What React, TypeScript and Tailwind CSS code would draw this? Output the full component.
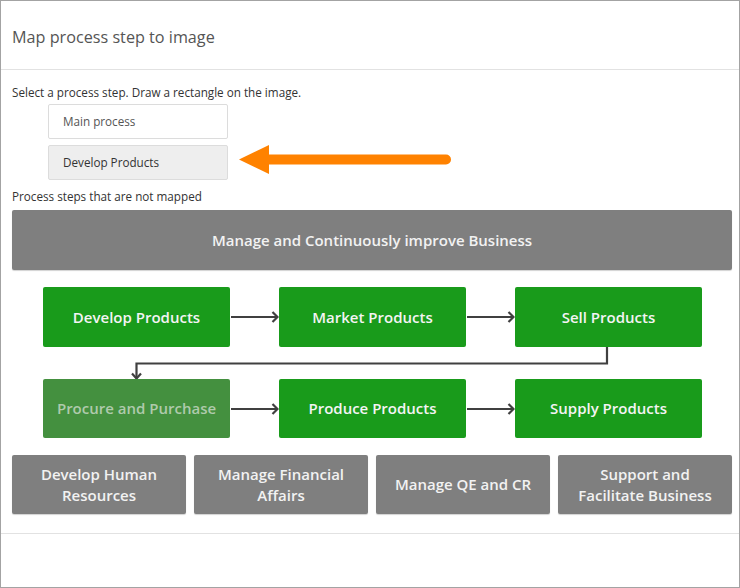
import React from "react";

function HArrow() {
  return (
    <svg width="49" height="60" viewBox="0 0 49 60" className="shrink-0">
      <line x1="1" y1="30" x2="47.5" y2="30" stroke="#404040" strokeWidth="2.2" />
      <polyline points="42.5,25 47.5,30 42.5,35" fill="none" stroke="#404040" strokeWidth="2.2" />
    </svg>
  );
}

function GreenBox({ children, faded }: { children: React.ReactNode; faded?: boolean }) {
  return (
    <div
      className={
        faded
          ? "w-[187px] h-full shrink-0 rounded-[2px] bg-[#44903f] text-[#afcaac] flex items-center justify-center text-[15px] font-semibold"
          : "w-[187px] h-full shrink-0 rounded-[2px] bg-[#199b1b] text-[#f4f4f4] flex items-center justify-center text-[15px] font-semibold"
      }
    >
      {children}
    </div>
  );
}

function GrayBox({ children }: { children: React.ReactNode }) {
  return (
    <div className="h-full rounded-[2px] bg-[#7f7f7f] text-[#f2f2f2] flex items-center justify-center text-center text-[15px] leading-[21px] font-semibold shadow-[0_1px_1px_rgba(0,0,0,0.18)]">
      {children}
    </div>
  );
}

export default function App() {
  return (
    <div className="w-[740px] h-[588px] box-border border border-[#a3a3a3] bg-white flex flex-col overflow-hidden font-['Open_Sans',sans-serif]">
      <div className="h-[69px] shrink-0 border-b border-[#e2e2e2] pl-[11px] pt-[24px]">
        <h1 className="text-[16.2px] leading-[24px] text-[#555555] font-normal">Map process step to image</h1>
      </div>

      <div className="flex-1 pl-[11px] pt-[13px]">
        <p className="text-[11.7px] leading-[18px] text-[#333333]">
          Select a process step. Draw a rectangle on the image.
        </p>
        <div className="ml-[36px] mt-[3px] flex flex-col gap-[6px]">
          <div className="w-[180px] h-[35px] box-border border border-[#dcdcdc] rounded-[2px] bg-white pl-[14px] pt-[1px] flex items-center text-[11.7px] text-[#555555]">
            Main process
          </div>
          <div className="flex items-start">
            <div className="w-[180px] h-[35px] box-border border border-[#dcdcdc] rounded-[2px] bg-[#eeeeee] pl-[14px] pt-[1px] flex items-center text-[11.7px] text-[#333333]">
              Develop Products
            </div>
            <svg width="214" height="30" viewBox="0 0 214 30" className="ml-[11px] shrink-0">
              <polygon points="0,14.5 30,0 30,29" fill="#ff8200" />
              <line x1="29" y1="14.5" x2="207" y2="14.5" stroke="#ff8200" strokeWidth="10" strokeLinecap="round" />
            </svg>
          </div>
        </div>
        <p className="mt-[7px] text-[11.7px] leading-[18px] text-[#333333]">Process steps that are not mapped</p>

        <div className="mt-[5px] w-[720px] flex flex-col">
          <div className="h-[60px] rounded-[2px] bg-[#7f7f7f] text-[#f2f2f2] flex items-center justify-center text-[15px] font-semibold shadow-[0_1px_1px_rgba(0,0,0,0.18)]">
            Manage and Continuously improve Business
          </div>

          <div className="mt-[17px] h-[60px] pl-[31px] flex">
            <GreenBox>Develop Products</GreenBox>
            <HArrow />
            <GreenBox>Market Products</GreenBox>
            <HArrow />
            <GreenBox>Sell Products</GreenBox>
          </div>

          <svg width="720" height="32" viewBox="0 0 720 32" className="block">
            <polyline
              points="595,0 595,16.5 124.5,16.5 124.5,31.5"
              fill="none"
              stroke="#404040"
              strokeWidth="2.2"
            />
            <polyline points="120,26.5 124.5,31.5 129,26.5" fill="none" stroke="#404040" strokeWidth="2.2" />
          </svg>

          <div className="h-[59px] pl-[31px] flex">
            <GreenBox faded>Procure and Purchase</GreenBox>
            <HArrow />
            <GreenBox>Produce Products</GreenBox>
            <HArrow />
            <GreenBox>Supply Products</GreenBox>
          </div>

          <div className="mt-[17px] h-[59px] grid grid-cols-4 gap-[8px]">
            <GrayBox>
              Develop Human
              <br />
              Resources
            </GrayBox>
            <GrayBox>
              Manage Financial
              <br />
              Affairs
            </GrayBox>
            <GrayBox>Manage QE and CR</GrayBox>
            <GrayBox>
              Support and
              <br />
              Facilitate Business
            </GrayBox>
          </div>
        </div>
      </div>

      <div className="h-[54px] shrink-0 border-t border-[#e2e2e2]" />
    </div>
  );
}
